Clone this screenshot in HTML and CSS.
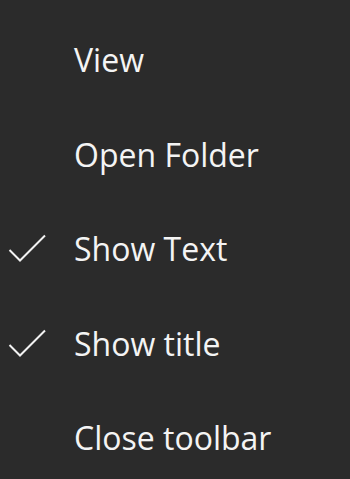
FILE: index.html
```html
<!DOCTYPE html>
<html>
<head>
<meta charset="utf-8">
<link rel="stylesheet" href="styles.css">
</head>
<body>
<ul class="menu">
  <li class="item"><span class="check"></span><span class="label">View</span></li>
  <li class="item"><span class="check"></span><span class="label">Open Folder</span></li>
  <li class="item"><span class="check"><svg width="40" height="30" viewBox="0 0 40 30"><path d="M1.5 16 L12 26.5 L37 1.5" fill="none" stroke="#f2f2f2" stroke-width="2"/></svg></span><span class="label">Show Text</span></li>
  <li class="item"><span class="check"><svg width="40" height="30" viewBox="0 0 40 30"><path d="M1.5 16 L12 26.5 L37 1.5" fill="none" stroke="#f2f2f2" stroke-width="2"/></svg></span><span class="label">Show title</span></li>
  <li class="item"><span class="check"></span><span class="label">Close toolbar</span></li>
</ul>
</body>
</html>
```
FILE: styles.css
```css
html, body {
  margin: 0;
  padding: 0;
  background: #2b2b2b;
  width: 350px;
  height: 479px;
  overflow: hidden;
}
.menu {
  list-style: none;
  margin: 0;
  padding: 13px 0 0 0;
  display: flex;
  flex-direction: column;
  font-family: "Open Sans", sans-serif;
  font-size: 32px;
  color: #f4f4f4;
}
.item {
  height: 94.5px;
  display: flex;
  align-items: center;
}
.check {
  width: 74px;
  display: flex;
  padding-left: 8px;
  box-sizing: border-box;
}
.check svg { display: block; }
.label { line-height: 1; }
```
